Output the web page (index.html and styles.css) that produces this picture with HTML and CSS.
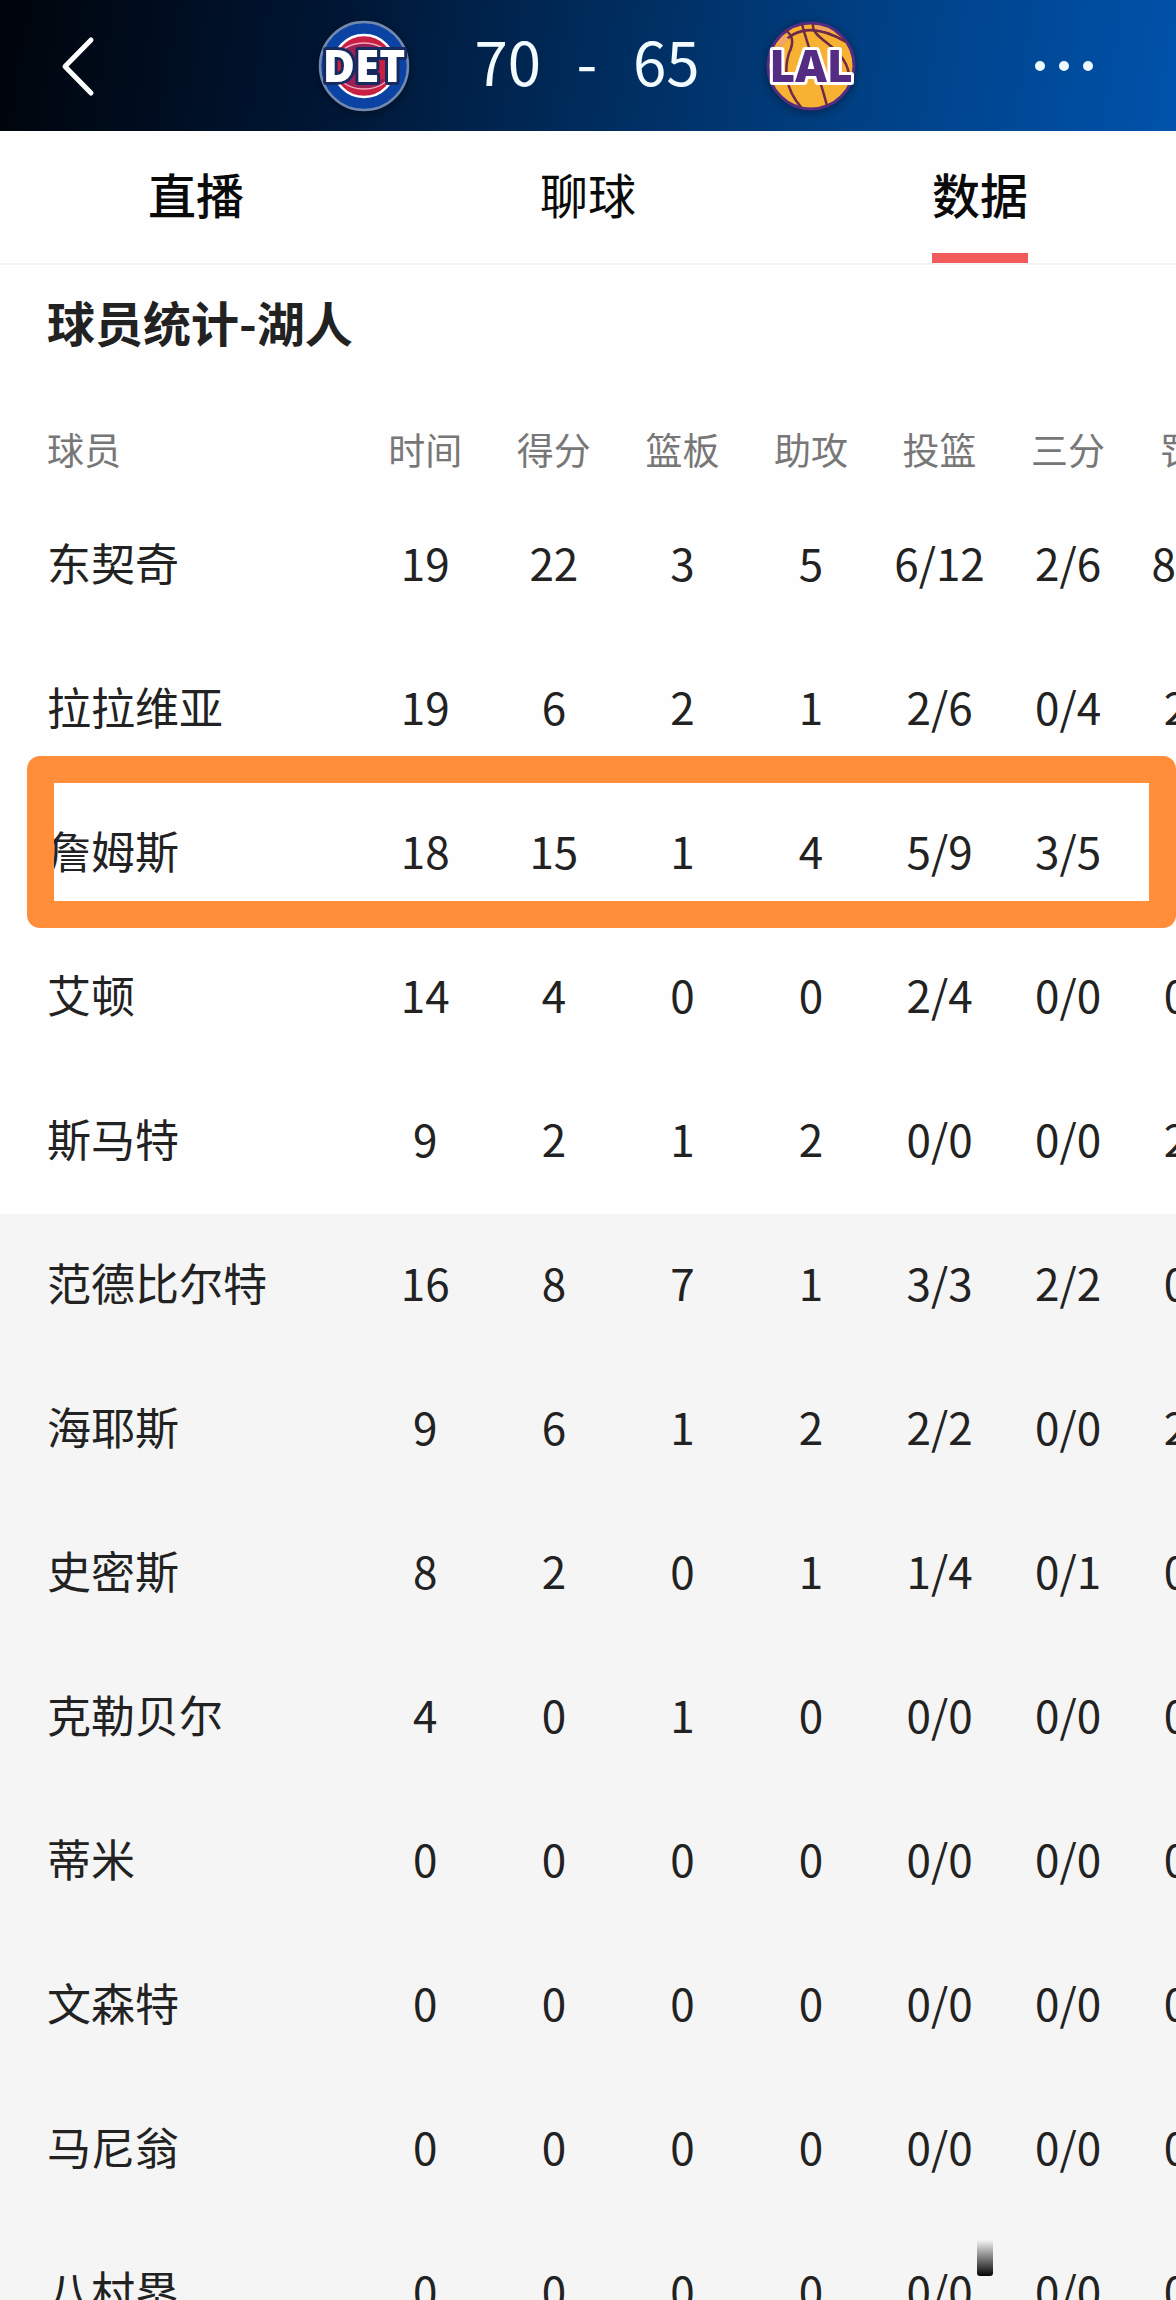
FILE: index.html
```
<!DOCTYPE html>
<html lang="zh-CN">
  <head>
    <meta charset="UTF-8" />
    <meta name="viewport" content="width=device-width, initial-scale=1.0" />
    <title>球员统计</title>
    <link rel="stylesheet" href="styles.css">
  </head>
  <body>
    <header class="cabecera">
      <button class="volver" type="button" aria-label="返回">
        <svg width="36" height="62" viewBox="0 0 36 62"><path d="M31 5 L5 31.500 L31 58" fill="none" stroke="#fff" stroke-width="5" stroke-linecap="round" stroke-linejoin="round" /></svg>
      </button>
      <div class="marcador">
        <svg class="logo" viewBox="0 0 90 90" role="img" aria-label="DET">
          <circle cx="45" cy="45" r="44" fill="#0a43a3" stroke="#7288ae" stroke-width="2.500" />
          <circle cx="45" cy="45" r="31" fill="#c81f43" stroke="#fff" stroke-width="2.500" />
          <ellipse cx="45" cy="45" rx="30" ry="23" fill="#9b1f55" stroke="#f3a9bd" stroke-width="1.500" />
          <path d="M16 32h15v26H16zM58 34h14v24H58z" fill="#c81f43" />
          <text class="det" x="45" y="61" text-anchor="middle">DET</text>
        </svg>
        <div class="puntos"><span>70</span><span>-</span><span>65</span></div>
        <svg class="logo" viewBox="0 0 90 90" role="img" aria-label="LAL">
          <circle cx="45" cy="45" r="43" fill="#f7b233" stroke="#552c83" stroke-width="3" />
          <g fill="none" stroke="#6b2a4c" stroke-width="2.500">
            <path d="M14 25C30 5 52 4 80 21" />
            <path d="M19 9C29 15 27 24 23 32C18 48 19 68 35 86" />
            <path d="M36 3C40 20 55 60 61 85" />
            <path d="M47 3C45 19 78 24 83 53" />
          </g>
          <path d="M50 5Q60 5 67 11Q58 10 50 8zM17 14l6 4-8 8-4-1z" fill="#efa46a" />
          <text class="lal" x="45" y="61" text-anchor="middle">LAL</text>
        </svg>
      </div>
      <button class="mas" type="button" aria-label="更多">
        <svg width="60" height="12" viewBox="0 0 60 12" fill="#eefaff"><circle cx="6" cy="6" r="5" /><circle cx="30" cy="6" r="5" /><circle cx="54" cy="6" r="5" /></svg>
      </button>
    </header>

    <nav class="pestanas">
      <a class="fuerte" href="#directo">直播</a>
      <a href="#charla">聊球</a>
      <a class="fuerte activa" href="#datos">数据</a>
    </nav>

    <main id="datos">
      <h2>球员统计-湖人</h2>
      <div class="tabla">
        <table>
          <thead>
            <tr><th>球员</th><th>时间</th><th>得分</th><th>篮板</th><th>助攻</th><th>投篮</th><th>三分</th><th>罚球</th></tr>
          </thead>
          <tbody>
            <tr><th>东契奇</th><td>19</td><td>22</td><td>3</td><td>5</td><td>6/12</td><td>2/6</td><td>8/10</td></tr>
            <tr><th>拉拉维亚</th><td>19</td><td>6</td><td>2</td><td>1</td><td>2/6</td><td>0/4</td><td>2/2</td></tr>
            <tr><th>詹姆斯</th><td>18</td><td>15</td><td>1</td><td>4</td><td>5/9</td><td>3/5</td><td>2/2</td></tr>
            <tr><th>艾顿</th><td>14</td><td>4</td><td>0</td><td>0</td><td>2/4</td><td>0/0</td><td>0/0</td></tr>
            <tr><th>斯马特</th><td>9</td><td>2</td><td>1</td><td>2</td><td>0/0</td><td>0/0</td><td>2/2</td></tr>
          </tbody>
          <tbody class="suplentes">
            <tr><th>范德比尔特</th><td>16</td><td>8</td><td>7</td><td>1</td><td>3/3</td><td>2/2</td><td>0/0</td></tr>
            <tr><th>海耶斯</th><td>9</td><td>6</td><td>1</td><td>2</td><td>2/2</td><td>0/0</td><td>2/2</td></tr>
            <tr><th>史密斯</th><td>8</td><td>2</td><td>0</td><td>1</td><td>1/4</td><td>0/1</td><td>0/0</td></tr>
            <tr><th>克勒贝尔</th><td>4</td><td>0</td><td>1</td><td>0</td><td>0/0</td><td>0/0</td><td>0/0</td></tr>
            <tr><th>蒂米</th><td>0</td><td>0</td><td>0</td><td>0</td><td>0/0</td><td>0/0</td><td>0/0</td></tr>
            <tr><th>文森特</th><td>0</td><td>0</td><td>0</td><td>0</td><td>0/0</td><td>0/0</td><td>0/0</td></tr>
            <tr><th>马尼翁</th><td>0</td><td>0</td><td>0</td><td>0</td><td>0/0</td><td>0/0</td><td>0/0</td></tr>
            <tr><th>八村塁</th><td>0</td><td>0</td><td>0</td><td>0</td><td>0/0</td><td>0/0</td><td>0/0</td></tr>
          </tbody>
        </table>
        <div class="resaltado"></div>
      </div>
      <div class="sombra"></div>
    </main>
  </body>
</html>
```
FILE: styles.css
```
* {
  box-sizing: border-box;
}
body {
  margin: 0;
  height: 100vh;
  display: flex;
  flex-direction: column;
  overflow: hidden;
  background: #fefefe;
  color: #222;
  font-family: "Noto Sans CJK SC", sans-serif;
}
button {
  border: 0;
  padding: 0;
  background: none;
  display: flex;
}
/* Cabecera con el marcador centrado */
.cabecera {
  flex: none;
  height: 131px;
  padding: 0 82px 0 60px;
  display: grid;
  grid-template-columns: 1fr auto 1fr;
  align-items: center;
  background: linear-gradient(100deg, #00040a 0%, #001634 28%, #002b5b 50%, #004084 73%, #0052ab 100%);
}
.marcador {
  display: flex;
  align-items: center;
  gap: 66px;
  margin-left: 20px;
}
.logo {
  width: 90px;
  height: 90px;
  overflow: visible;
  filter: drop-shadow(0 2px 5px rgba(0, 0, 0, 0.4));
}
.logo text {
  font-family: "Open Sans", sans-serif;
  font-weight: 800;
  font-size: 44px;
  stroke-width: 6px;
  stroke-linejoin: round;
  paint-order: stroke;
}
.det {
  fill: #fff;
  stroke: #152a5e;
}
.lal {
  fill: #552c83;
  stroke: #fff;
}
.puntos {
  display: flex;
  justify-content: space-between;
  width: 225px;
  padding-bottom: 12px;
  font-size: 60px;
  line-height: 90px;
  color: #f2fcff;
}
.mas {
  justify-self: end;
}
/* Pestañas */
.pestanas {
  flex: none;
  height: 134px;
  display: flex;
  border-bottom: 2px solid #f3f3f3;
}
.pestanas a {
  flex: 1;
  display: flex;
  justify-content: center;
  position: relative;
  font-size: 48px;
  line-height: 124px;
  color: #0a0a0a;
  text-decoration: none;
}
.pestanas .fuerte {
  font-weight: 500;
}
.activa::after {
  content: "";
  position: absolute;
  bottom: 0;
  width: 96px;
  height: 10px;
  background: #f15b5b;
}
main {
  flex: 1;
  min-height: 0;
  position: relative;
  overflow: hidden;
}
h2 {
  margin: 0;
  padding: 0 47px 30px;
  font-size: 48px;
  line-height: 112px;
  font-weight: 700;
}
/* La tabla es más ancha que la ventana, la última columna queda cortada */
.tabla {
  position: relative;
}
table {
  width: 100%;
  min-width: 1261px;
  table-layout: fixed;
  border-collapse: collapse;
}
th,
td {
  padding: 0 0 8px;
  height: 144px;
  font-size: 44px;
  line-height: 64px;
  font-weight: 400;
  text-align: center;
  white-space: nowrap;
}
th:first-child {
  width: 361px;
  padding-left: 47px;
  text-align: left;
}
thead th {
  height: 87px;
  padding-bottom: 4px;
  font-size: 37px;
  line-height: 56px;
  color: #777;
}
.suplentes {
  background: #f5f5f5;
}
/* Marco naranja sobre la fila de 詹姆斯 */
.resaltado {
  position: absolute;
  top: 349px;
  left: 27px;
  right: 0;
  height: 172px;
  border: 27px solid #ff8d39;
  border-radius: 13px;
}
.sombra {
  position: absolute;
  right: 183px;
  bottom: 24px;
  width: 16px;
  height: 36px;
  border-radius: 0 0 3px 3px;
  background: linear-gradient(rgba(0, 0, 0, 0), #888 45%, #050505);
}
```
